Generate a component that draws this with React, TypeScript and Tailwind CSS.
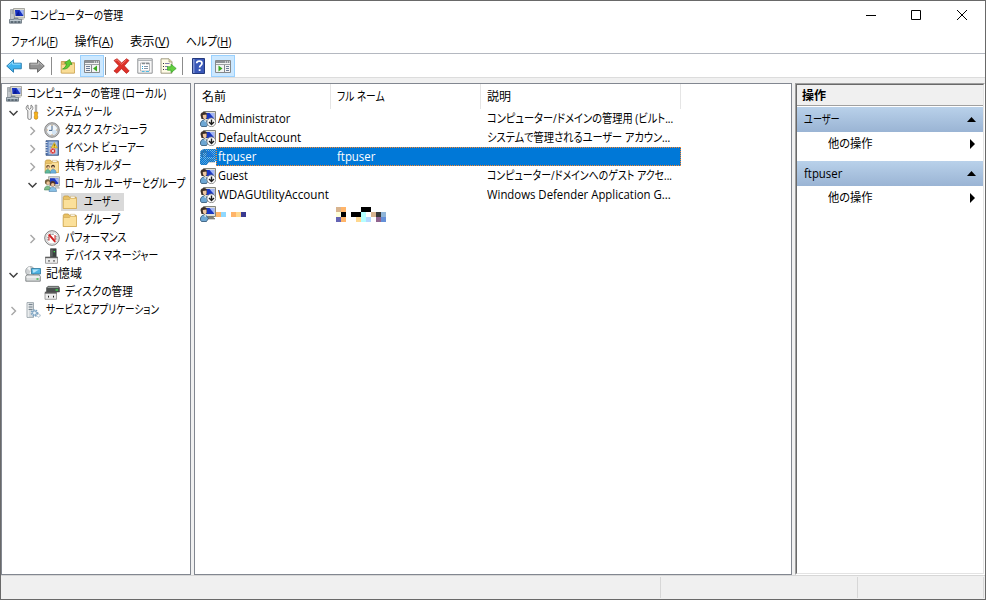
import { ReactNode, useLayoutEffect, useRef, useState } from 'react';

interface FitProps {
  w: number;
  className?: string;
  children: ReactNode;
}

// UI text is condensed horizontally so that it fills the given width
function Fit({ w, className = '', children }: FitProps) {
  const ref = useRef<HTMLSpanElement>(null);
  const [scale, setScale] = useState(1);

  useLayoutEffect(() => {
    if (ref.current) setScale(w / ref.current.offsetWidth);
  }, [w]);

  return (
    <span className={`block shrink-0 whitespace-nowrap ${className}`} style={{ width: w }}>
      <span
        ref={ref}
        className="inline-block origin-left [font-feature-settings:'palt']"
        style={{ transform: `scaleX(${scale})` }}
      >
        {children}
      </span>
    </span>
  );
}

function Svg({ children, className = '' }: { children: ReactNode; className?: string }) {
  return (
    <svg width="16" height="16" viewBox="0 0 16 16" className={`block shrink-0 ${className}`}>
      {children}
    </svg>
  );
}

const ComputerIcon = () => (
  <Svg>
    <path d="M1.500 1.500h4v10h-4z" fill="#c3c8cc" stroke="#8d9398" strokeWidth=".7" />
    <path d="M2.500 3h2M2.500 5h2" stroke="#6d757b" strokeWidth=".7" />
    <path d="M4.500.5h11v9.500h-10z" fill="#dcdcd4" stroke="#97978f" strokeWidth=".8" />
    <path d="M6 2h8.300v6H6.500z" fill="#1732c0" />
    <path d="M10.500 2h3.800v5.500z" fill="#a4b8f5" />
    <path d="M6.800 7.800L9.500 3l1.500 4.800z" fill="#0b1c96" />
    <path d="M9 10.500h5l1 1.500H9z" fill="#c4c4bc" />
    <path d="M.5 11.500h4l.8-1.300h3.500l.8 1.300h2.900v3.700H.5z" fill="#8d9ba5" stroke="#5c6973" strokeWidth=".7" />
    <path d="M1 12.300h11" stroke="#dde5ea" strokeWidth=".8" />
    <path d="M2 14h2M5.500 14h2M9 14h2" stroke="#34424c" />
  </Svg>
);

const ToolsIcon = () => (
  <Svg>
    <path
      d="M3 1v3l1.500 1.300L6 4V1c1.600.8 2 2.300 1.800 3.500C7.600 5.600 7 6.200 6.300 6.700V14c0 2-3.500 2-3.500 0V6.700C1.500 6 1 5 1.200 3.700 1.300 2.500 2 1.500 3 1z"
      fill="#f1f1f1"
      stroke="#7b7b7b"
      strokeWidth=".9"
    />
    <path d="M10.200 1h1.600l-.2 6.500h-1.200z" fill="#c9c9c9" stroke="#777" strokeWidth=".5" />
    <path d="M9.300 8h3.400v2l-.6 1 .6 1v2c0 1.700-3.400 1.700-3.400 0v-2l.6-1-.6-1z" fill="#f9b518" stroke="#b97a10" strokeWidth=".6" />
  </Svg>
);

const ClockIcon = () => (
  <Svg>
    <circle cx="8" cy="8" r="7.300" fill="#c4c4c4" stroke="#7c7c7c" strokeWidth=".9" />
    <circle cx="8" cy="8" r="5.700" fill="#f2f7fb" stroke="#959ba1" strokeWidth=".6" />
    <path d="M8 8h5A5 5 0 0 1 8 13z" fill="#d3e4f3" />
    <path d="M8 3.500V8.400H5" fill="none" stroke="#43658b" />
    <path d="M8 2.700v1M8 12.300v1M2.800 8h1M12.200 8h1" stroke="#d39a55" />
  </Svg>
);

const EventIcon = () => (
  <Svg>
    <path d="M2 .7h12.500v14.600H2z" fill="#5579b5" stroke="#3b5683" strokeWidth=".8" />
    <path d="M4.500 1.500h9v13h-9z" fill="#a9c1e3" />
    <path d="M5.500 4h3M5.500 7h2M5.500 10h1.500M5.500 12.500h2" stroke="#6d86ad" strokeWidth=".9" />
    <path d="M1 2.500h2.500M1 5h2.500M1 7.500h2.500M1 10h2.500M1 12.500h2.500" stroke="#e3e7ed" strokeWidth="1.200" />
    <path d="M10.300 2.500L13.500 8H7.200z" fill="#fbd43a" stroke="#b9961b" strokeWidth=".6" />
    <path d="M10.300 4.200v2M10.300 6.700v.7" stroke="#463b00" strokeWidth=".8" />
    <circle cx="8.800" cy="11" r="2.900" fill="#d4383a" stroke="#f4dede" strokeWidth=".5" />
    <path d="M7.600 9.800l2.400 2.400M10 9.800l-2.400 2.400" stroke="#fff" strokeWidth=".9" />
  </Svg>
);

const FolderShape = () => (
  <>
    <path d="M1.300 14.500V3.300L2.300 2h4l1 1.300h6.900v11.200z" fill="#e9c267" stroke="#c59c45" strokeWidth=".8" />
    <path d="M8.500 2.300h4.500v2.200H8.500z" fill="#fdfdfb" stroke="#c8ab6b" strokeWidth=".5" />
    <path d="M1.300 5.500H7.500l1-1.200h6v10.200H1.300z" fill="#fbe09a" stroke="#d3ab57" strokeWidth=".7" />
  </>
);

const FolderIcon = () => (
  <Svg>
    <FolderShape />
  </Svg>
);

const SharedFolderIcon = () => (
  <Svg>
    <FolderShape />
    <circle cx="4" cy="8.800" r="1.800" fill="#6d4a2c" />
    <circle cx="4.300" cy="9.300" r="1.100" fill="#efc69b" />
    <path d="M1 15.200c0-5 5.500-5 5.500 0z" fill="#5db89b" stroke="#387c66" strokeWidth=".4" />
    <circle cx="9" cy="8.500" r="1.800" fill="#3e2b22" />
    <circle cx="9" cy="9.300" r="1.100" fill="#efc69b" />
    <path d="M6.200 15.200c0-5.300 6-5.300 6 0z" fill="#6bb0dc" stroke="#3a7199" strokeWidth=".4" />
  </Svg>
);

const GroupIcon = () => (
  <Svg>
    <path d="M4.500.7h11v9h-10z" fill="#dedfda" stroke="#9b9d97" strokeWidth=".8" />
    <path d="M6 2.200h8.300v5.900H6z" fill="#1c38c2" />
    <path d="M10.500 2.200h3.800v5z" fill="#a2b6f5" />
    <path d="M11.500 10.500h3l1 1.800h-4z" fill="#c9cac5" stroke="#91928d" strokeWidth=".4" />
    <circle cx="3.600" cy="6" r="2.700" fill="#77613c" />
    <circle cx="4.100" cy="7" r="1.700" fill="#edc49a" />
    <path d="M.4 14c0-5.500 6.500-5.500 6.500 0z" fill="#7cbc88" stroke="#39774a" strokeWidth=".5" />
    <circle cx="8.700" cy="7.700" r="2.700" fill="#54382a" />
    <circle cx="8.800" cy="8.700" r="1.800" fill="#ecc096" />
    <path d="M5 15.500c0-5.800 7.600-5.800 7.600 0z" fill="#86bfe6" stroke="#3a6f9a" strokeWidth=".5" />
  </Svg>
);

const PerformanceIcon = () => (
  <Svg>
    <circle cx="8" cy="8" r="7.300" fill="#efefef" stroke="#6e6e6e" strokeWidth=".9" />
    <circle cx="8" cy="8" r="5.800" fill="#fff" stroke="#b5b5b5" strokeWidth=".5" />
    <path d="M4 10.500V6.500M6 4.200h4M12 6v4.500" fill="none" stroke="#555" strokeWidth=".9" strokeDasharray="1.500 .7" />
    <path d="M4.800 4.300l6.500 7.500" stroke="#cf2222" strokeWidth="2" />
    <path d="M5 5v5.500M11 5v5" stroke="#cf2222" strokeWidth="1" />
  </Svg>
);

const DeviceIcon = () => (
  <Svg>
    <path d="M6.500.7h5.700v8.500H6.500z" fill="#3b4140" stroke="#252928" strokeWidth=".5" />
    <path d="M7.300 1.500h1.200v7H7.300z" fill="#6b736f" />
    <path d="M9.700 3h1.300v1.300H9.700z" fill="#45e451" />
    <path d="M1.500 9.500h12v5.800h-12z" fill="#ededed" stroke="#8a8a8a" strokeWidth=".8" />
    <path d="M1.200 8.700h12.600v1.500H1.200z" fill="#5f5f5f" />
    <path d="M4.500 12h1v1.800h-1zM9.500 12h1v1.800h-1z" fill="#282828" />
  </Svg>
);

const StorageIcon = () => (
  <Svg>
    <circle cx="5.300" cy="5.300" r="4.700" fill="#cfd2d4" stroke="#8b9194" strokeWidth=".7" />
    <path d="M5.300 5.300L2 2l3-1.500zM5.300 5.300L8 9l-4 .5z" fill="#f7f8f8" />
    <path d="M6.500 2.500h9v5.500h-9z" fill="#4fb2e2" stroke="#2f7a9d" strokeWidth=".8" />
    <path d="M7.500 3.500h6.500L8.500 7z" fill="#b3e5fa" />
    <path d="M.8 10.500l1-1.700h12.500l1 1.700v4.700H.8z" fill="#d9dbdc" stroke="#6c7173" strokeWidth=".8" />
    <path d="M1.300 11h13.500" stroke="#fff" />
    <path d="M11.500 13h2" stroke="#29b737" strokeWidth="1.300" />
  </Svg>
);

const DiskIcon = () => (
  <Svg>
    <path d="M2.500 3.800L4 2.300h10.500l1 1.500V8H2.500z" fill="#4b504f" stroke="#3a3d3c" strokeWidth=".5" />
    <path d="M3.500 3.300h11" stroke="#a8adab" />
    <path d="M11.500 6h2.500" stroke="#3bea4b" strokeWidth="1.300" />
    <path d="M1 9h11.500v6.300H1z" fill="#ededed" stroke="#8a8a8a" strokeWidth=".8" />
    <path d="M.8 7.700h12v1.800H.8z" fill="#5a5a5a" />
    <path d="M4 11.800h1v1.800H4zM9 11.800h1v1.800H9z" fill="#222" />
  </Svg>
);

const ServicesIcon = () => (
  <Svg>
    <path d="M2 .6h6.500v14.800H2z" fill="#d5dadd" stroke="#8f9aa2" strokeWidth=".8" />
    <path d="M3 2.500h4.500M3 5h4.500M3 7.500h4.500" stroke="#6d7c86" strokeWidth=".9" />
    <path d="M2.500 1h1.500v14H2.500z" fill="#fff" opacity=".5" />
    <circle cx="9.500" cy="11" r="2.900" fill="#d9e8f3" stroke="#7ea4c2" strokeWidth="1.900" strokeDasharray="1.500 .9" />
    <circle cx="9.500" cy="11" r="1.900" fill="#eef5fa" stroke="#7099ba" strokeWidth=".8" />
    <circle cx="13.500" cy="13.500" r="1.600" fill="#fff" stroke="#86a0b6" strokeDasharray="1 .6" />
  </Svg>
);

interface UserIconProps {
  disabled?: boolean;
  selected?: boolean;
}

const UserIcon = ({ disabled, selected }: UserIconProps) => (
  <Svg>
    <path d="M3.500.5h12v10h-11z" fill="#e1e1da" stroke="#77786f" strokeWidth=".9" />
    <path d="M5.500 2h8.700v6H5.500z" fill="#1a37c2" />
    <path d="M9.500 2h4.700v5.500z" fill="#a2b6f5" />
    <path d="M8.500 11h4.500l2 2H8z" fill="#8e8f88" stroke="#55564f" strokeWidth=".5" />
    <path d="M.5 4C.5.500 6.500-.5 7 3.500L6.500 8H1.500z" fill="#3c2f28" />
    <path d="M2.800 4l3.700-.4v3.200c-.8 2.300-3.700 1.600-3.700-1.800z" fill="#efc8a2" />
    <path d="M.4 14C0 8 6.500 7.500 8.300 12.500L6.500 15.500H1.500z" fill="#6ea7d3" stroke="#2c5271" strokeWidth=".8" />
    <path d="M3.800 9.200l1.500 2 .9-2z" fill="#f5fafd" />
    {disabled && (
      <>
        <circle cx="11.300" cy="11.300" r="4.400" fill="#fdfdfd" stroke="#777" strokeWidth=".8" />
        <path d="M11.500 8.500v4.500M9 11l2.500 2.500L14 11" fill="none" stroke="#1c1c1c" strokeWidth="1.400" />
      </>
    )}
    {selected && (
      <>
        <defs>
          <pattern id="dither" width="2" height="2" patternUnits="userSpaceOnUse">
            <path d="M0 0h1v1H0zM1 1h1v1H1z" fill="#0078d7" shapeRendering="crispEdges" />
          </pattern>
        </defs>
        <path d="M3.500 0H16v11l-1 2H9l-2.500 3H1l-1-2V9l.5-7z" fill="#4a9de0" opacity=".6" />
        <path d="M3.500 0H16v11l-1 2H9l-2.500 3H1l-1-2V9l.5-7z" fill="url(#dither)" />
      </>
    )}
  </Svg>
);

const Chevron = ({ open }: { open: boolean }) => (
  <svg width="10" height="10" viewBox="0 0 10 10" className="mt-0.5 block shrink-0">
    {open ? (
      <path d="M.5 3l4 4 4-4" fill="none" stroke="#404040" strokeWidth="1.500" />
    ) : (
      <path d="M2.500 1l4 4-4 4" fill="none" stroke="#a6a6a6" strokeWidth="1.400" />
    )}
  </svg>
);

interface TreeItem {
  label: string;
  w: number;
  icon: ReactNode;
  indent: string;
  open?: boolean;
  selected?: boolean;
}

const tree: TreeItem[] = [
  { label: 'システム ツール', w: 66, icon: <ToolsIcon />, indent: 'pl-[7px]', open: true },
  { label: 'タスク スケジューラ', w: 82, icon: <ClockIcon />, indent: 'pl-[26px]', open: false },
  { label: 'イベント ビューアー', w: 80, icon: <EventIcon />, indent: 'pl-[26px]', open: false },
  { label: '共有フォルダー', w: 66, icon: <SharedFolderIcon />, indent: 'pl-[26px]', open: false },
  { label: 'ローカル ユーザーとグループ', w: 120, icon: <GroupIcon />, indent: 'pl-[26px]', open: true },
  { label: 'ユーザー', w: 36, icon: <FolderIcon />, indent: 'pl-[44px]', selected: true },
  { label: 'グループ', w: 36, icon: <FolderIcon />, indent: 'pl-[44px]' },
  { label: 'パフォーマンス', w: 61, icon: <PerformanceIcon />, indent: 'pl-[26px]', open: false },
  { label: 'デバイス マネージャー', w: 93, icon: <DeviceIcon />, indent: 'pl-[26px]' },
  { label: '記憶域', w: 36, icon: <StorageIcon />, indent: 'pl-[7px]', open: true },
  { label: 'ディスクの管理', w: 68, icon: <DiskIcon />, indent: 'pl-[26px]' },
  { label: 'サービスとアプリケーション', w: 113, icon: <ServicesIcon />, indent: 'pl-[7px]', open: false },
];

const users = [
  { name: 'Administrator', w: 72, desc: 'コンピューター/ドメインの管理用 (ビルト...', dw: 186, disabled: true },
  { name: 'DefaultAccount', w: 83, desc: 'システムで管理されるユーザー アカウン...', dw: 183, disabled: true },
  { name: 'ftpuser', w: 38, full: 'ftpuser', selected: true },
  { name: 'Guest', w: 30, desc: 'コンピューター/ドメインへのゲスト アクセ...', dw: 185, disabled: true },
  { name: 'WDAGUtilityAccount', w: 111, desc: 'Windows Defender Application G...', dw: 184, disabled: true },
];

const menus = [
  { label: 'ファイル', key: 'F', w: 47 },
  { label: '操作', key: 'A', w: 39 },
  { label: '表示', key: 'V', w: 39 },
  { label: 'ヘルプ', key: 'H', w: 45 },
];

// masked account, one letter-sized block per colour
const maskedName = ['#ffb469', '#8fd8ff', '', '#ffb469', '#ffd88f', '#3a3a90'];
const maskedFull = [
  '#d8b48f', '#ffb469', '', '', '', '#000', '#000', '', '', '',
  '#ffffd8', '#000', '', '#000', '#000', '#b4ffff', '', '#d8b48f', '#3a3a3a', '#8fb4d8',
  '#6464b4', '#ffb469', '', '', '#ffd88f', '#b4ffff', '#b4d8ff', '', '#90648f', '#6490d8',
];

function TitleBar() {
  return (
    <div className="flex h-[29px] items-center pl-2">
      <ComputerIcon />
      <Fit w={93} className="ml-[5px]">コンピューターの管理</Fit>
      <svg width="110" height="12" viewBox="0 0 110 12" className="mr-[13px] ml-auto block" fill="none" stroke="#000">
        <path d="M4 5.500h10" />
        <path d="M49.500.5h9v9h-9z" />
        <path d="M95 0l10 10M105 0L95 10" />
      </svg>
    </div>
  );
}

function PanelIcon({ right }: { right?: boolean }) {
  return (
    <svg width="16" height="16" viewBox="0 0 16 16" className="block">
      <path d="M.5 2.500h15v12H.5z" fill="#f3f3f3" stroke="#85888b" />
      <path d="M1 3h14v2H1z" fill="#8e9296" />
      <path d="M10 4h1M12 4h1M14 4h1" stroke="#fff" />
      <path d="M1 6.500h14" stroke="#9da1a4" />
      {right ? (
        <>
          <path d="M9.500 7v7" stroke="#85898d" />
          <path d="M11 8.500h3M11 10.500h3M11 12.500h3" stroke="#6c7c96" />
          <path d="M3.500 7.500L7.500 10.500l-4 3z" fill="#39a91f" />
        </>
      ) : (
        <>
          <path d="M7.500 7v7" stroke="#85898d" />
          <path d="M2 8.500h4M2 10.500h4M2 12.500h4" stroke="#6c7c96" />
          <path d="M13 7.500L9 10.500l4 3z" fill="#39a91f" />
        </>
      )}
    </svg>
  );
}

function Toolbar() {
  return (
    <div className="flex h-6 items-center border-b border-[#dcdcdc] bg-white pl-[5px]">
      <svg width="16" height="16" viewBox="0 0 16 16" className="block">
        <path d="M.7 8l6.800-6.300v3.500h7.800v5.600H7.500v3.500z" fill="#3fb2ee" stroke="#2377aa" strokeWidth=".9" />
        <path d="M2.500 7.500L6.500 4v2.200h8" fill="none" stroke="#93dcff" />
      </svg>
      <svg width="16" height="16" viewBox="0 0 16 16" className="ml-[7px] block">
        <path d="M15.300 8L8.500 1.700v3.500H.7v5.600h7.800v3.500z" fill="#929292" stroke="#626262" strokeWidth=".9" />
        <path d="M1.500 6.200h8V4l4 3.500" fill="none" stroke="#bdbdbd" />
      </svg>
      <div className="ml-1.5 h-[18px] w-px bg-[#8c8c8c]" />
      <svg width="16" height="16" viewBox="0 0 16 16" className="ml-2 block">
        <path d="M1.300 15V3.500h5l1 1.300h7.200V15z" fill="#e4bd68" stroke="#bc9341" strokeWidth=".8" />
        <path d="M1.300 15V6.500H8l1-1.200h5.500V15z" fill="#f9dd97" stroke="#cfa653" strokeWidth=".6" />
        <path d="M2.500 11c2-.8 3.500-2.500 4-5.200L4.500 5l5-3.500L12 6.500l-2-.3c-.8 3.300-3.500 5.300-7.500 4.800z" fill="#5ccb32" stroke="#2f9020" strokeWidth=".7" />
      </svg>
      <div className="ml-1 flex h-[22px] w-6 items-center justify-center border border-[#99d1ff] bg-[#cce8ff]">
        <PanelIcon />
      </div>
      <div className="ml-px h-[18px] w-px bg-[#8c8c8c]" />
      <svg width="17" height="16" viewBox="0 0 17 16" className="ml-[7px] block">
        <path
          d="M1 2.500L4 .7 8.700 5 13.500.7 16 2.500 11.300 7.800 16.200 13l-2.800 2.400-4.900-4.700L4 15.300.9 13l5-5.200z"
          fill="#dd3028"
          stroke="#b81d17"
          strokeWidth=".7"
        />
        <path d="M2.200 2.700L4 1.800l4.700 4.500 4.800-4.500" fill="none" stroke="#f58076" strokeWidth=".8" />
      </svg>
      <svg width="16" height="16" viewBox="0 0 16 16" className="ml-[7px] block">
        <path d="M.8.8h14.400v14.400H.8z" fill="#f8f8f8" stroke="#909396" />
        <path d="M1 2.500h14" stroke="#b1b5b8" />
        <path d="M3.500 5h9v8h-9z" fill="#fff" stroke="#a4a8ac" strokeWidth=".8" />
        <path d="M5 5.500h3M9 5.500h3" stroke="#858b91" strokeWidth="1.300" />
        <path d="M7 8.500h4M7 10.500h4" stroke="#8396a9" />
        <path d="M5 8.500h1M5 10.500h1" stroke="#27a5d8" />
        <path d="M5 13.500h2.500M9 13.500h3" stroke="#4fbce5" />
      </svg>
      <svg width="17" height="16" viewBox="0 0 17 16" className="ml-[7px] block">
        <path d="M1 .8h8l3 3v11.400H1z" fill="#fffbe6" stroke="#969177" strokeWidth=".9" />
        <path d="M9 1v3h3" fill="#eadfae" stroke="#969177" strokeWidth=".7" />
        <path d="M3 5.500h1M3 8.500h1M3 11.500h1" stroke="#333" />
        <path d="M5 5.500h4.500M5 8.500h3M5 11.500h3" stroke="#807cab" />
        <path d="M7.500 8.700H11V6.200L16.200 10.500 11 14.700v-2.500H7.500z" fill="#63cf3f" stroke="#35a128" strokeWidth=".7" />
      </svg>
      <div className="ml-[5px] h-[18px] w-px bg-[#8c8c8c]" />
      <svg width="14" height="16" viewBox="0 0 14 16" className="ml-[9px] block">
        <path d="M.5.5h12v15H.5z" fill="#3a58b8" stroke="#24397c" />
        <path d="M1 1h1.500v14H1z" fill="#8094d4" />
        <path d="M4.700 5.300c0-3 5.300-3 5.300 0 0 2.200-2.400 2-2.400 4.200" fill="none" stroke="#fff" strokeWidth="1.700" />
        <path d="M6.700 11.200h1.800V13H6.700z" fill="#fff" />
      </svg>
      <div className="ml-[5px] flex h-[22px] w-6 items-center justify-center border border-[#99d1ff] bg-[#cce8ff]">
        <PanelIcon right />
      </div>
    </div>
  );
}

function TreePanel() {
  return (
    <div className="w-[190px] border border-[#828790] bg-white pt-px">
      <div className="flex h-[18px] items-center pl-1">
        <ComputerIcon />
        <Fit w={139} className="ml-[5px]">コンピューターの管理 (ローカル)</Fit>
      </div>
      {tree.map((item) => (
        <div key={item.label} className={`flex h-[18px] items-center ${item.indent}`}>
          <div className="w-2.5">{item.open !== undefined && <Chevron open={item.open} />}</div>
          <div
            className={`ml-[5px] flex h-[18px] items-center pr-1 pl-px ${
              item.selected ? 'bg-[#d9d9d9]' : ''
            }`}
          >
            {item.icon}
            <Fit w={item.w} className={item.indent === 'pl-[44px]' ? 'ml-1.5' : 'ml-[5px]'}>
              {item.label}
            </Fit>
          </div>
        </div>
      ))}
    </div>
  );
}

function UserList() {
  return (
    <div className="ml-[3px] w-[598px] border border-[#828790] bg-white">
      <div className="flex h-[25px] items-center">
        <div className="flex h-full w-[136px] items-center border-r border-[#e5e5e5] pl-[7px]">
          <Fit w={24}>名前</Fit>
        </div>
        <div className="flex h-full w-[150px] items-center border-r border-[#e5e5e5] pl-1.5">
          <Fit w={48}>フル ネーム</Fit>
        </div>
        <div className="flex h-full w-[200px] items-center border-r border-[#e5e5e5] pl-1.5">
          <Fit w={24}>説明</Fit>
        </div>
      </div>
      {users.map((user) => (
        <div key={user.name} className="flex h-[19px] items-center pl-[5px]">
          <UserIcon disabled={user.disabled} selected={user.selected} />
          <div
            className={`flex h-[19px] w-[465px] items-center border ${
              user.selected
                ? 'border-dotted border-[#ff8728] bg-[#0078d7] text-white'
                : 'border-transparent'
            }`}
          >
            <div className="w-[119px] pl-px">
              <Fit w={user.w}>{user.name}</Fit>
            </div>
            <div className="w-[151px] pl-px">{user.full && <Fit w={38}>{user.full}</Fit>}</div>
            {user.desc && <Fit w={user.dw}>{user.desc}</Fit>}
          </div>
        </div>
      ))}
      <div className="flex h-[19px] items-center pl-[5px]">
        <UserIcon />
        <div className="mt-0.5 flex w-[120px]">
          {maskedName.map((c, i) => (
            <div key={i} className="size-[5px]" style={{ background: c }} />
          ))}
        </div>
        <div className="mt-0.5 grid grid-cols-[repeat(10,5px)]">
          {maskedFull.map((c, i) => (
            <div key={i} className="size-[5px]" style={{ background: c }} />
          ))}
        </div>
      </div>
    </div>
  );
}

function ActionGroup({ title, w }: { title: string; w: number }) {
  return (
    <>
      <div className="flex h-[25px] items-center bg-linear-to-b from-[#b9d1ea] to-[#9ab4d4] pr-[7px] pl-[7px]">
        <Fit w={w}>{title}</Fit>
        <svg width="9" height="5" viewBox="0 0 9 5" className="ml-auto block">
          <path d="M0 5l4.500-5L9 5z" fill="#000" />
        </svg>
      </div>
      <div className="mb-[5px] flex h-6 items-center pr-2 pl-[31px]">
        <Fit w={45}>他の操作</Fit>
        <svg width="5" height="10" viewBox="0 0 5 10" className="ml-auto block">
          <path d="M0 0l5 5-5 5z" fill="#000" />
        </svg>
      </div>
    </>
  );
}

function ActionsPanel() {
  return (
    <div className="ml-[3px] flex w-[190px] border border-t-[#a0a0a0] border-r-white border-b-white border-l-[#a0a0a0]">
      <div className="flex-1 border border-t-[#696969] border-r-[#e3e3e3] border-b-[#e3e3e3] border-l-[#696969] bg-white">
        <div className="mb-px flex h-[21px] items-center border-b border-[#a0a0a0] bg-[#f0f0f0] pt-0.5 pl-[5px] font-semibold">
          <Fit w={24}>操作</Fit>
        </div>
        <ActionGroup title="ユーザー" w={36} />
        <ActionGroup title="ftpuser" w={38} />
      </div>
    </div>
  );
}

export default function App() {
  return (
    <div className="flex h-[600px] w-[986px] flex-col overflow-hidden border border-[#696969] bg-white font-['Open_Sans','Noto_Sans_CJK_JP',sans-serif] text-[12px] leading-[18px] text-black">
      <TitleBar />
      <div className="flex h-[24px] items-center gap-[16.5px] border-b border-[#b4b8c0] pl-[10px]">
        {menus.map((menu) => (
          <Fit key={menu.key} w={menu.w}>
            {menu.label}(<span className="underline">{menu.key}</span>)
          </Fit>
        ))}
      </div>
      <Toolbar />
      <div className="flex h-[497px] bg-[#f0f0f0] pt-[5px]">
        <TreePanel />
        <UserList />
        <ActionsPanel />
      </div>
      <div className="flex flex-1 border-t border-[#d7d7d7] bg-[#f0f0f0] py-px">
        <div className="w-[660px] border-r border-[#d7d7d7]" />
        <div className="w-[197px] border-r border-[#d7d7d7]" />
        <div className="w-[126px] border-r border-[#d7d7d7]" />
      </div>
    </div>
  );
}
